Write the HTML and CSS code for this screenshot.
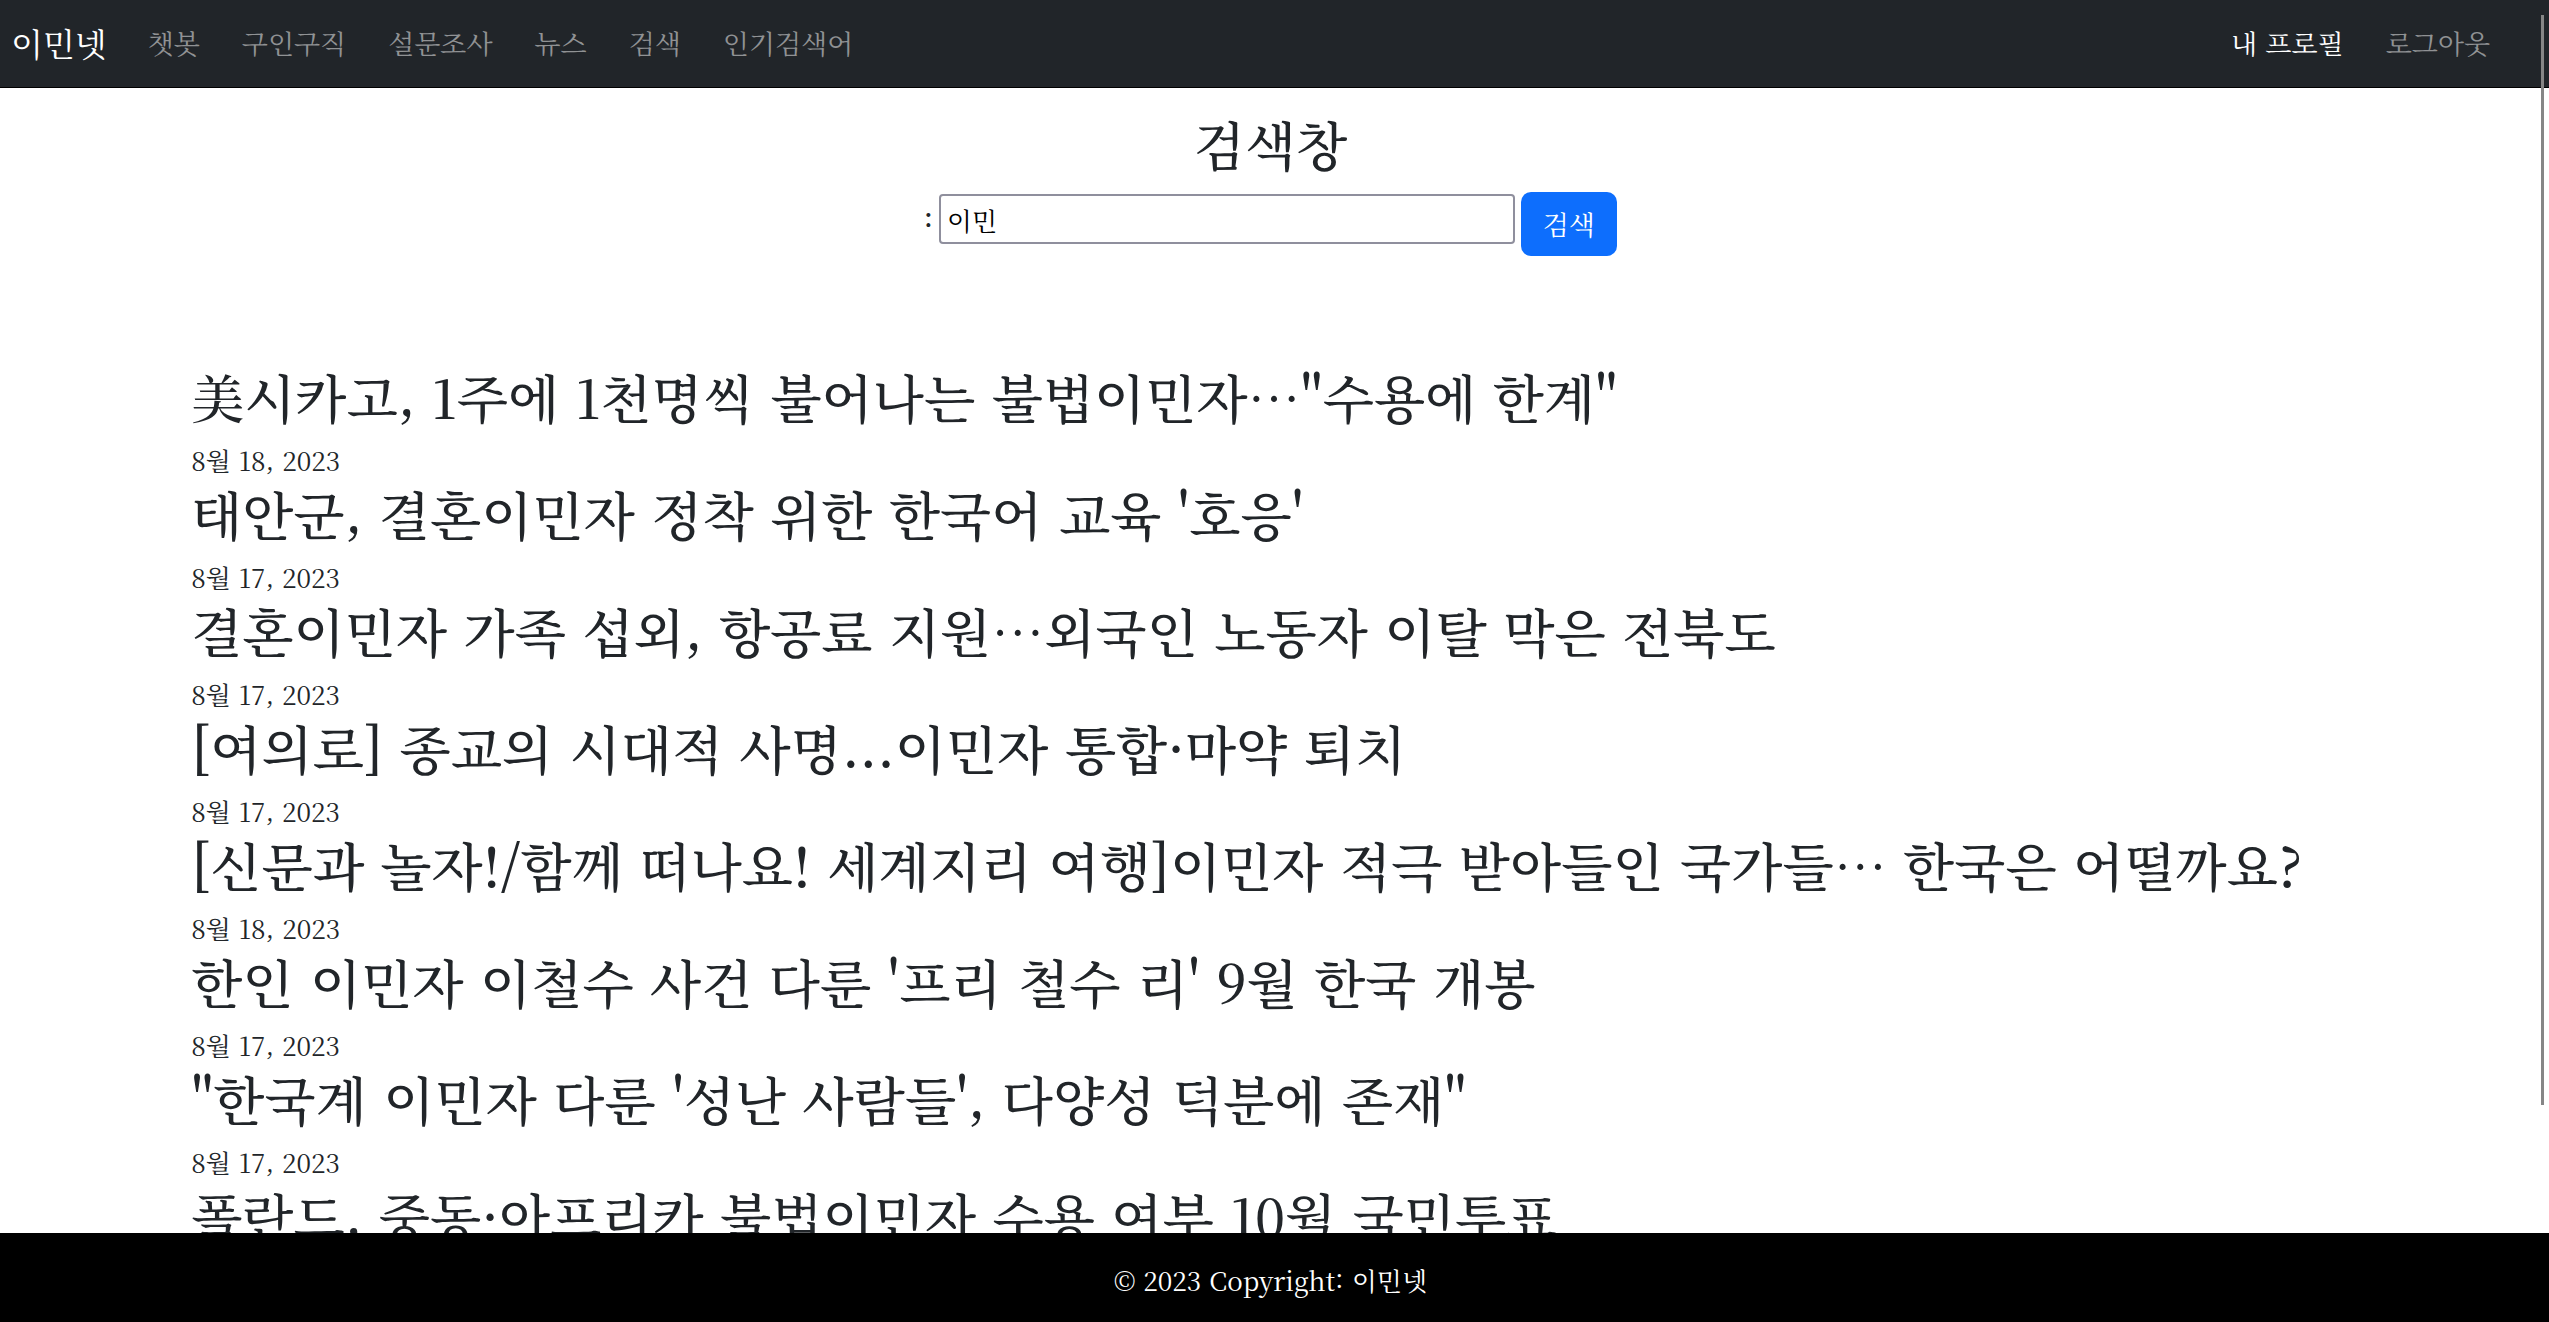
FILE: index.html
```html
<!DOCTYPE html>
<html lang="ko">
<head>
<meta charset="utf-8">
<meta name="viewport" content="width=device-width, initial-scale=1">
<title>이민넷</title>
<link rel="stylesheet" href="styles.css">
</head>
<body>
<nav class="navbar">
  <a class="brand" href="#">이민넷</a>
  <div class="nav-links">
    <a class="nav-link" href="#">챗봇</a>
    <a class="nav-link" href="#">구인구직</a>
    <a class="nav-link" href="#">설문조사</a>
    <a class="nav-link" href="#">뉴스</a>
    <a class="nav-link" href="#">검색</a>
    <a class="nav-link" href="#">인기검색어</a>
  </div>
  <div class="nav-links nav-user">
    <a class="nav-link active" href="#">내 프로필</a>
    <a class="nav-link" href="#">로그아웃</a>
  </div>
</nav>
<main>
  <section class="search">
    <h1 class="title">검색창</h1>
    <form class="search-form">
      <label class="search-label" for="q">:</label>
      <input class="search-input" id="q" type="text" value="이민">
      <button class="search-button" type="button">검색</button>
    </form>
  </section>
  <section class="results">
    <article class="item"><h2 class="title">美시카고, 1주에 1천명씩 불어나는 불법이민자…"수용에 한계"</h2><p class="date">8월 18, 2023</p></article>
    <article class="item"><h2 class="title">태안군, 결혼이민자 정착 위한 한국어 교육 '호응'</h2><p class="date">8월 17, 2023</p></article>
    <article class="item"><h2 class="title">결혼이민자 가족 섭외, 항공료 지원…외국인 노동자 이탈 막은 전북도</h2><p class="date">8월 17, 2023</p></article>
    <article class="item"><h2 class="title">[여의로] 종교의 시대적 사명...이민자 통합·마약 퇴치</h2><p class="date">8월 17, 2023</p></article>
    <article class="item"><h2 class="title">[신문과 놀자!/함께 떠나요! 세계지리 여행]이민자 적극 받아들인 국가들… 한국은 어떨까요?</h2><p class="date">8월 18, 2023</p></article>
    <article class="item"><h2 class="title">한인 이민자 이철수 사건 다룬 '프리 철수 리' 9월 한국 개봉</h2><p class="date">8월 17, 2023</p></article>
    <article class="item"><h2 class="title">"한국계 이민자 다룬 '성난 사람들', 다양성 덕분에 존재"</h2><p class="date">8월 17, 2023</p></article>
    <article class="item"><h2 class="title">폴란드, 중동·아프리카 불법이민자 수용 여부 10월 국민투표</h2></article>
  </section>
</main>
<footer class="footer">© 2023 Copyright: <a class="footer-link" href="#">이민넷</a></footer>
<div class="scroll-thumb"></div>
</body>
</html>
```
FILE: styles.css
```css
* { box-sizing: border-box; }
body {
  margin: 0;
  background: #fff;
  color: #212529;
  font-family: "Noto Serif KR", "Noto Serif CJK KR", "Noto Sans CJK KR", serif;
  font-size: 26px;
  line-height: 38px;
}
a { color: inherit; text-decoration: none; }
h1, h2, p { margin: 0; }
.navbar {
  display: flex;
  align-items: center;
  height: 88px;
  padding: 0 38px 2px 11px;
  background: #212529;
  border-bottom: 1px solid #000;
}
.brand { color: #fff; font-size: 33px; margin-right: 20px; }
.nav-links { display: flex; }
.nav-user { margin-left: auto; }
.nav-link { padding: 0 21px; color: #909294; font-size: 27px; white-space: nowrap; }
.active { color: #fff; }
.title { font-size: 53px; line-height: 70px; font-weight: 500; }
.search { padding: 20px 8px 105px 0; text-align: center; }
.search-form {
  display: flex;
  justify-content: center;
  align-items: flex-start;
  gap: 6px;
  margin-top: 14px;
}
.search-label { padding-top: 8px; font-weight: 600; }
.search-input {
  width: 576px;
  height: 50px;
  margin-top: 2px;
  padding: 0 6px;
  border: 2px solid #8f8f9d;
  border-radius: 4px;
  color: #000;
  font: inherit;
}
.search-button {
  height: 64px;
  padding: 0 22px;
  border: 0;
  border-radius: 10px;
  background: #0d6efd;
  color: #fff;
  font: inherit;
  font-size: 27px;
}
.results { display: grid; padding: 0 0 0 7.5%; }
.item .title { padding-bottom: 11px; white-space: nowrap; }
.date { line-height: 36px; }
.footer {
  position: fixed;
  inset: auto 0 0;
  height: 89px;
  padding: 28px 8px 20px 0;
  background: #000;
  color: #fff;
  text-align: center;
}
.scroll-thumb {
  position: fixed;
  top: 15px;
  right: 5px;
  width: 3px;
  height: 1090px;
  background: #868686;
}
```
